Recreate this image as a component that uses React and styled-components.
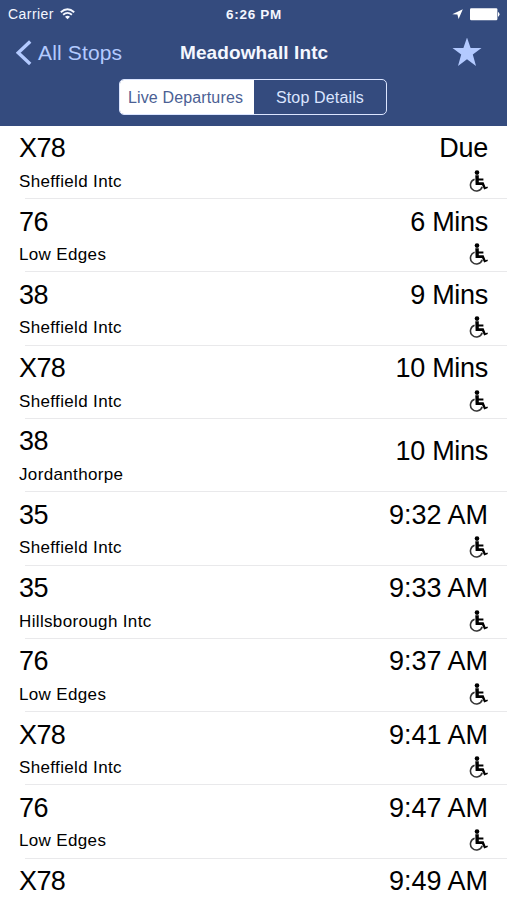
import styled, { createGlobalStyle } from "styled-components";

const GlobalStyle = createGlobalStyle`
  body {
    margin: 0;
    background: #fff;
    overflow: hidden;
    font-family: "Liberation Sans", Arial, sans-serif;
  }
`;

const Screen = styled.div`
  width: 507px;
  height: 900px;
  overflow: hidden;
  background: #fff;
`;

const Header = styled.header`
  box-sizing: border-box;
  height: 125.8px;
  background: #344b7e;
  color: #f4f7ff;
`;

const StatusBar = styled.div`
  height: 28px;
  padding: 0 7px 0 8px;
  display: grid;
  grid-template-columns: 1fr auto 1fr;
  align-items: center;
`;

const Carrier = styled.div`
  display: flex;
  align-items: center;
  gap: 6px;
  font-size: 14px;
  letter-spacing: 0.45px;
`;

const Clock = styled.div`
  font-size: 13.5px;
  font-weight: 700;
  letter-spacing: 0.7px;
`;

const StatusIcons = styled.div`
  display: flex;
  align-items: center;
  justify-content: flex-end;
  gap: 7px;
`;

const NavBar = styled.nav`
  height: 50px;
  padding: 0 25px 0 16px;
  display: grid;
  grid-template-columns: 164px 1fr auto;
  align-items: center;
`;

const BackButton = styled.a`
  display: flex;
  align-items: center;
  gap: 6px;
  color: #b3caff;
  font-size: 21px;
  letter-spacing: 0.15px;
`;

const Title = styled.h1`
  margin: 0;
  font-size: 19px;
  font-weight: 700;
  letter-spacing: 0.1px;
`;

const Favourite = styled.div`
  display: flex;
`;

const Segments = styled.div`
  box-sizing: border-box;
  width: 268px;
  height: 36px;
  margin: 1px auto 0 119px;
  display: flex;
  border: 1.5px solid #dbe5ff;
  border-radius: 5px;
  overflow: hidden;
`;

const Segment = styled.div`
  flex: ${({ $active }) => ($active ? "0 0 134px" : "1")};
  box-sizing: border-box;
  padding: 1px ${({ $active }) => ($active ? "3px" : "0")} 0 0;
  display: flex;
  align-items: center;
  justify-content: center;
  white-space: nowrap;
  font-size: 16px;
  letter-spacing: 0.15px;
  background: ${({ $active }) => ($active ? "#fff" : "transparent")};
  color: ${({ $active }) => ($active ? "#4b5f94" : "#dbe5ff")};
`;

const Row = styled.div`
  box-sizing: border-box;
  height: 73.3px;
  padding: 0 19px;
  display: flex;
  justify-content: space-between;
  background: linear-gradient(#e9e9eb, #e9e9eb) 25px 100% / 100% 1px no-repeat;
`;

const Service = styled.div`
  padding-top: 6.5px;
`;

const Route = styled.div`
  font-size: 27px;
  line-height: 32px;
  letter-spacing: -0.6px;
`;

const Destination = styled.div`
  margin-top: 6.5px;
  font-size: 17px;
  line-height: 22px;
  letter-spacing: 0.35px;
`;

const Arrival = styled.div`
  display: flex;
  flex-direction: column;
  align-items: flex-end;
  padding-top: ${({ $centered }) => ($centered ? "16.5px" : "6.5px")};
`;

const Time = styled.div`
  font-size: 27px;
  line-height: 32px;
  letter-spacing: ${({ $clock }) => ($clock ? "0" : "-0.3px")};
  white-space: nowrap;
`;

const Wheelchair = styled.svg`
  display: block;
  margin-top: 5.5px;
`;

const departures = [
  { route: "X78", to: "Sheffield Intc", time: "Due", accessible: true },
  { route: "76", to: "Low Edges", time: "6 Mins", accessible: true },
  { route: "38", to: "Sheffield Intc", time: "9 Mins", accessible: true },
  { route: "X78", to: "Sheffield Intc", time: "10 Mins", accessible: true },
  { route: "38", to: "Jordanthorpe", time: "10 Mins", accessible: false },
  { route: "35", to: "Sheffield Intc", time: "9:32 AM", accessible: true },
  { route: "35", to: "Hillsborough Intc", time: "9:33 AM", accessible: true },
  { route: "76", to: "Low Edges", time: "9:37 AM", accessible: true },
  { route: "X78", to: "Sheffield Intc", time: "9:41 AM", accessible: true },
  { route: "76", to: "Low Edges", time: "9:47 AM", accessible: true },
  { route: "X78", to: "", time: "9:49 AM", accessible: false },
];

function WifiIcon() {
  return (
    <svg width="15" height="12" viewBox="0 0 15 12" fill="none">
      <path d="M0.8 4.2Q7.5 -1.6 14.2 4.2" stroke="#f4f7ff" strokeWidth="1.9" />
      <path d="M3.1 6.8Q7.5 3 11.9 6.8" stroke="#f4f7ff" strokeWidth="1.8" />
      <path d="M7.5 11.2L5 8.7Q7.5 6.7 10 8.7Z" fill="#f4f7ff" />
    </svg>
  );
}

function WheelchairIcon() {
  return (
    <Wheelchair width="19" height="22" viewBox="0 0 19 22" fill="none">
      <circle cx="8" cy="2.6" r="2.3" fill="#000" />
      <path
        d="M6.3 5.2H9.8V8.6H14.4V10.4H9.8V12.3H14.6L16.6 17.3L18.4 16.5L18.9 18.1L15.2 19.5L13 14.9H6.6Z"
        fill="#000"
      />
      <path d="M5.6 9.3A6 6 0 1 0 13.2 16.8" stroke="#333" strokeWidth="1.6" />
    </Wheelchair>
  );
}

function App() {
  return (
    <Screen>
      <GlobalStyle />
      <Header>
        <StatusBar>
          <Carrier>
            Carrier
            <WifiIcon />
          </Carrier>
          <Clock>6:26 PM</Clock>
          <StatusIcons>
            <svg width="11" height="11" viewBox="0 0 11 11">
              <path d="M10.8 0.3L6.6 10L5.4 5.6L0.3 5.2Z" fill="#fff" />
            </svg>
            <svg width="30" height="13" viewBox="0 0 30 13">
              <rect x="0" y="0.3" width="27.4" height="12" rx="1.2" fill="#fff" />
              <path d="M28 4.2H28.6Q30.4 6.3 28.6 8.4H28Z" fill="#fff" />
            </svg>
          </StatusIcons>
        </StatusBar>
        <NavBar>
          <BackButton>
            <svg width="16" height="26" viewBox="0 0 16 26" fill="none">
              <path d="M14.2 1.5L2.2 12.8L14.2 24" stroke="#b3caff" strokeWidth="3.4" />
            </svg>
            All Stops
          </BackButton>
          <Title>Meadowhall Intc</Title>
          <Favourite>
            <svg width="30" height="30" viewBox="0 0 30 30">
              <path
                d="M15 -0.5L18.6 10H29.5L20.8 16.6L24 28L15 21.3L6 28L9.2 16.6L0.5 10H11.4Z"
                fill="#b3caff"
              />
            </svg>
          </Favourite>
        </NavBar>
        <Segments>
          <Segment $active>Live Departures</Segment>
          <Segment>Stop Details</Segment>
        </Segments>
      </Header>
      {departures.map((d, i) => (
        <Row key={i}>
          <Service>
            <Route>{d.route}</Route>
            <Destination>{d.to}</Destination>
          </Service>
          <Arrival $centered={d.to && !d.accessible}>
            <Time $clock={d.time.includes(":")}>{d.time}</Time>
            {d.accessible && <WheelchairIcon />}
          </Arrival>
        </Row>
      ))}
    </Screen>
  );
}

export default App;
